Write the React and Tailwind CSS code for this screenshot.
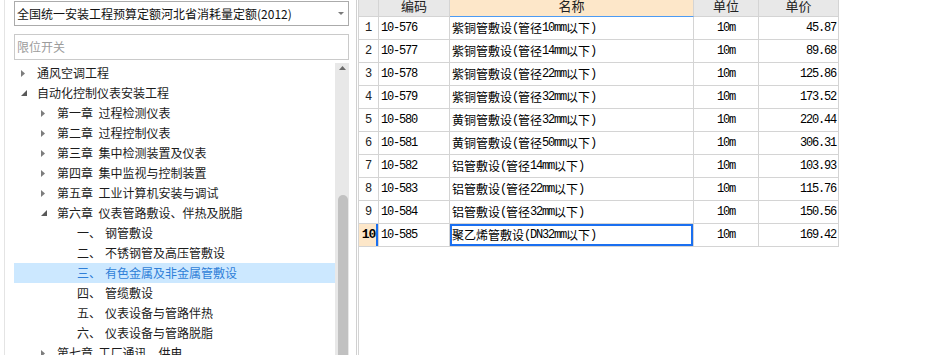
import React from "react";

const tree = [
  { level: 0, label: "通风空调工程", arrow: "closed" },
  { level: 0, label: "自动化控制仪表安装工程", arrow: "open" },
  { level: 1, label: "第一章 过程检测仪表", arrow: "closed" },
  { level: 1, label: "第二章 过程控制仪表", arrow: "closed" },
  { level: 1, label: "第三章 集中检测装置及仪表", arrow: "closed" },
  { level: 1, label: "第四章 集中监视与控制装置", arrow: "closed" },
  { level: 1, label: "第五章 工业计算机安装与调试", arrow: "closed" },
  { level: 1, label: "第六章 仪表管路敷设、伴热及脱脂", arrow: "open" },
  { level: 2, num: "一、", label: "钢管敷设" },
  { level: 2, num: "二、", label: "不锈钢管及高压管敷设" },
  { level: 2, num: "三、", label: "有色金属及非金属管敷设", selected: true },
  { level: 2, num: "四、", label: "管缆敷设" },
  { level: 2, num: "五、", label: "仪表设备与管路伴热" },
  { level: 2, num: "六、", label: "仪表设备与管路脱脂" },
  { level: 1, label: "第七章 工厂通讯、供电", arrow: "closed" },
];

const rows = [
  ["10-576", "紫铜管敷设(管径10mm以下)", "10m", "45.87"],
  ["10-577", "紫铜管敷设(管径14mm以下)", "10m", "89.68"],
  ["10-578", "紫铜管敷设(管径22mm以下)", "10m", "125.86"],
  ["10-579", "紫铜管敷设(管径32mm以下)", "10m", "173.52"],
  ["10-580", "黄铜管敷设(管径32mm以下)", "10m", "220.44"],
  ["10-581", "黄铜管敷设(管径50mm以下)", "10m", "306.31"],
  ["10-582", "铝管敷设(管径14mm以下)", "10m", "103.93"],
  ["10-583", "铝管敷设(管径22mm以下)", "10m", "115.76"],
  ["10-584", "铝管敷设(管径32mm以下)", "10m", "150.56"],
  ["10-585", "聚乙烯管敷设(DN32mm以下)", "10m", "169.42"],
];

// ascii runs in mono, narrowed to half the CJK width
const Mix = ({ t }) =>
  t.split(/([\x20-\x7e]+)/).map((s, i) =>
    /^[\x20-\x7e]+$/.test(s) ? (
      <span key={i} className="font-['Liberation_Mono'] tracking-[-1.2px]">
        {s}
      </span>
    ) : (
      <span key={i}>{s}</span>
    )
  );

const Arrow = ({ kind }) => {
  if (kind === "open")
    return (
      <svg width="6" height="6" viewBox="0 0 6 6" className="ml-[1px]">
        <polygon points="6,0 6,6 0,6" fill="#595959" />
      </svg>
    );
  if (kind === "closed")
    return (
      <svg width="4" height="7" viewBox="0 0 4 7" className="ml-[1px]">
        <polygon points="0,0 4,3.5 0,7" fill="#7d7d7d" />
      </svg>
    );
  return null;
};

const TreeRow = ({ item }) => {
  const pad = ["pl-[6px]", "pl-[26px]", "pl-[46px]"][item.level];
  return (
    <div
      className={`h-[20px] flex items-center shrink-0 ${pad} ${
        item.selected ? "bg-[#cce8ff] text-[#2f7fd8]" : "text-[#1b1b1b]"
      }`}
    >
      <div className="w-[17px] flex items-center">
        <Arrow kind={item.arrow} />
      </div>
      {item.num ? (
        <>
          <span className="w-[28px]">{item.num}</span>
          <span>{item.label}</span>
        </>
      ) : (
        <span className="whitespace-pre">{item.label.replace(" ", "  ")}</span>
      )}
    </div>
  );
};

const cell = "border-r border-b border-[#d4d4d4] flex items-center";

export default function App() {
  return (
    <div className="w-[931px] h-[355px] flex bg-white overflow-hidden font-['Noto_Sans_CJK_SC',sans-serif] text-[12px]">
      {/* left pane */}
      <div className="w-[357px] h-full flex shrink-0 border-r border-[#d0d0d0]">
        <div className="w-[4px]" />
        <div className="flex-1 flex flex-col border-l border-[#e4e4e4] pl-[9px] pr-[7px] min-w-0">
          <div className="mt-[1px] h-[25px] border border-[#ababab] flex items-center pl-[2px] pr-[4px] text-[#111]">
            <span className="flex-1 whitespace-nowrap">全国统一安装工程预算定额河北省消耗量定额(2012)</span>
            <svg width="6" height="3" viewBox="0 0 6 3">
              <polygon points="0,0 6,0 3,3" fill="#7a7a7a" />
            </svg>
          </div>
          <div className="mt-[8px] h-[26px] border border-[#cacaca] flex items-center pl-[2px] text-[#9c9c9c]">
            限位开关
          </div>
          <div className="mt-[3px] flex-1 flex min-h-0 overflow-hidden">
            <div className="flex-1 flex flex-col min-w-0">
              {tree.map((item, i) => (
                <TreeRow key={i} item={item} />
              ))}
            </div>
            <div className="w-[14px] bg-[#e8e8e8] relative">
              <svg width="7" height="4" viewBox="0 0 7 4" className="absolute left-[4px] top-[3px]">
                <polygon points="0,4 7,4 3.5,0" fill="#6b6b6b" />
              </svg>
              <div className="absolute left-[3px] w-[10px] top-[132px] bottom-0 rounded-t-[5px] bg-[#c1c1c1]" />
            </div>
          </div>
        </div>
      </div>

      {/* right pane */}
      <div className="flex-1 pl-[1px]">
        <div className="w-[481px] border-l border-[#d4d4d4] grid grid-cols-[20px_71px_244px_65px_80px] text-black">
          <div className={`${cell} h-[17px] bg-[#e8e8e8]`} />
          <div className={`${cell} h-[17px] bg-[#e8e8e8] justify-center overflow-hidden`}>
            <span className="text-[13px] leading-[14px] -mt-[4px] text-[#222]">编码</span>
          </div>
          <div className="h-[17px] border-r border-[#d4d4d4] border-b border-b-[#4d9bf3] bg-[#fde7c9] flex items-center justify-center overflow-hidden">
            <span className="text-[13px] leading-[14px] -mt-[4px] text-[#222]">名称</span>
          </div>
          <div className={`${cell} h-[17px] bg-[#e8e8e8] justify-center overflow-hidden`}>
            <span className="text-[13px] leading-[14px] -mt-[4px] text-[#222]">单位</span>
          </div>
          <div className={`${cell} h-[17px] bg-[#e8e8e8] justify-center overflow-hidden`}>
            <span className="text-[13px] leading-[14px] -mt-[4px] text-[#222]">单价</span>
          </div>

          {rows.map((r, i) => {
            const sel = i === rows.length - 1;
            return (
              <React.Fragment key={i}>
                <div
                  className={`${cell} h-[23px] justify-center font-['Liberation_Mono'] ${
                    sel
                      ? "bg-[#fde7c9] font-bold text-[13px] tracking-[-1px] shadow-[inset_-2px_0_0_#1a6ff0]"
                      : "text-[#222] text-[12px]"
                  }`}
                >
                  {i + 1}
                </div>
                <div className={`${cell} h-[23px] pl-[2px]`}>
                  <Mix t={r[0]} />
                </div>
                <div
                  className={`${cell} h-[23px] pl-[2px] whitespace-nowrap ${
                    sel ? "shadow-[inset_0_0_0_2px_#1a6ff0]" : ""
                  }`}
                >
                  <Mix t={r[1]} />
                </div>
                <div className={`${cell} h-[23px] justify-center`}>
                  <Mix t={r[2]} />
                </div>
                <div className={`${cell} h-[23px] justify-end pr-[2px]`}>
                  <Mix t={r[3]} />
                </div>
              </React.Fragment>
            );
          })}
        </div>
        <div className="h-full border-l border-[#d4d4d4] w-0" />
      </div>
    </div>
  );
}
